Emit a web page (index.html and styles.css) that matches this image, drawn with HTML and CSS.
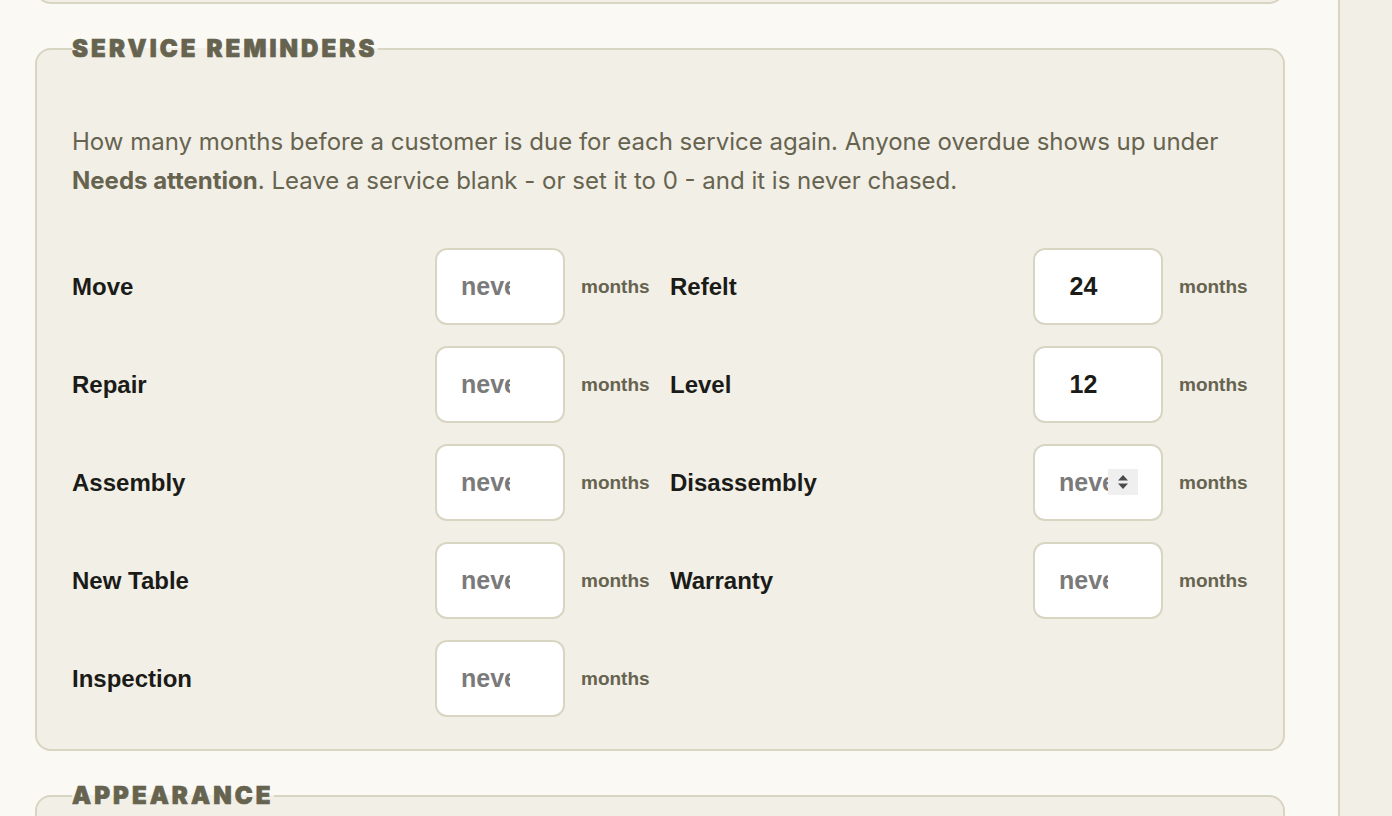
FILE: index.html
```html
<!DOCTYPE html>
<html lang="en">

<head>
    <meta charset="UTF-8">
    <meta name="viewport" content="width=device-width, initial-scale=1.0">
    <title>Settings</title>
    <link rel="stylesheet" href="styles.css">
</head>

<body>
    <div class="layout">
        <main class="settings">
            <div class="section section-above"></div>

            <fieldset class="section">
                <legend>Service Reminders</legend>
                <p class="hint">How many months before a customer is due for each service again. Anyone overdue shows up under
                    <strong>Needs attention</strong>. Leave a service blank - or set it to 0 - and it is never chased.</p>

                <div class="reminder-grid">
                    <div class="reminder">
                        <label for="move">Move</label>
                        <input type="number" id="move" min="0" placeholder="never">
                        <span class="unit">months</span>
                    </div>
                    <div class="reminder">
                        <label for="refelt">Refelt</label>
                        <input type="number" id="refelt" min="0" placeholder="never" value="24">
                        <span class="unit">months</span>
                    </div>
                    <div class="reminder">
                        <label for="repair">Repair</label>
                        <input type="number" id="repair" min="0" placeholder="never">
                        <span class="unit">months</span>
                    </div>
                    <div class="reminder">
                        <label for="level">Level</label>
                        <input type="number" id="level" min="0" placeholder="never" value="12">
                        <span class="unit">months</span>
                    </div>
                    <div class="reminder">
                        <label for="assembly">Assembly</label>
                        <input type="number" id="assembly" min="0" placeholder="never">
                        <span class="unit">months</span>
                    </div>
                    <div class="reminder">
                        <label for="disassembly">Disassembly</label>
                        <div class="spin-field">
                            <input type="number" id="disassembly" min="0" placeholder="never">
                            <span class="spin">
                                <svg width="12" height="16" viewBox="0 0 12 16">
                                    <path d="M6 1 L11 6.5 H1 Z" fill="#4a4a48"/>
                                    <path d="M6 15 L11 9.5 H1 Z" fill="#4a4a48"/>
                                </svg>
                            </span>
                        </div>
                        <span class="unit">months</span>
                    </div>
                    <div class="reminder">
                        <label for="newtable">New Table</label>
                        <input type="number" id="newtable" min="0" placeholder="never">
                        <span class="unit">months</span>
                    </div>
                    <div class="reminder">
                        <label for="warranty">Warranty</label>
                        <input type="number" id="warranty" min="0" placeholder="never">
                        <span class="unit">months</span>
                    </div>
                    <div class="reminder">
                        <label for="inspection">Inspection</label>
                        <input type="number" id="inspection" min="0" placeholder="never">
                        <span class="unit">months</span>
                    </div>
                </div>
            </fieldset>

            <fieldset class="section">
                <legend>Appearance</legend>
                <p class="hint">Choose how the app looks on this device.</p>
            </fieldset>
        </main>

        <aside class="sidebar"></aside>
    </div>
</body>

</html>
```

FILE: styles.css
```css
body {
    margin: 0;
    font-family: "Liberation Sans", Arial, sans-serif;
    background-color: #faf9f4;
    color: #1b1b18;
    overflow: hidden;
}

.layout {
    display: flex;
    min-height: 100vh;
}

.settings {
    flex: 1;
    padding: 0 53px 0 35px;
}

.sidebar {
    width: 52px;
    border-left: 2px solid #d9d5c3;
    background-color: #f2efe7;
}

/* card for each group of settings */
.section {
    margin: 0 0 32px 0;
    padding: 24px 35px 32px 35px;
    border: 2px solid #d9d5c3;
    border-radius: 16px;
    background-color: #f2efe7;
    min-width: 0;
}

.section-above {
    height: 40px;
    margin-top: -40px;
    padding: 0;
}

legend {
    padding: 0;
    font-family: Inter, "Liberation Sans", sans-serif;
    font-size: 24px;
    font-weight: 900;
    line-height: 26px;
    letter-spacing: 3.1px;
    text-transform: uppercase;
    color: #66634f;
    -webkit-text-stroke: 0.7px #66634f;
}

.hint {
    margin: 36px 0 48px 0;
    font-family: Inter, "Liberation Sans", sans-serif;
    font-size: 24px;
    line-height: 39px;
    color: #66634f;
}

.hint strong {
    font-weight: 700;
}

.reminder-grid {
    display: grid;
    grid-template-columns: 1fr 1fr;
    column-gap: 20px;
    row-gap: 21px;
}

.reminder {
    display: grid;
    grid-template-columns: 1fr 130px 69px;
    column-gap: 16px;
    align-items: center;
}

.reminder label {
    font-size: 24px;
    font-weight: bold;
    color: #1b1b18;
}

.reminder input {
    display: block;
    height: 77px;
    width: 130px;
    padding: 0 24px;
    box-sizing: border-box;
    border: 2px solid #d9d5c3;
    border-radius: 12px;
    background-color: #ffffff;
    font-family: "Liberation Sans", Arial, sans-serif;
    font-size: 25px;
    font-weight: bold;
    color: #1b1b18;
    text-align: center;
    outline: none;
}

.reminder input::placeholder {
    color: #7a7a7a;
}

/* keep room for the stepper so every field lines up */
.reminder input::-webkit-inner-spin-button {
    -webkit-appearance: none;
    width: 29px;
    margin: 0;
}

.spin-field {
    position: relative;
}

.spin {
    position: absolute;
    top: 25px;
    left: 75px;
    width: 30px;
    height: 26px;
    background-color: #efefef;
    display: flex;
    align-items: center;
    justify-content: center;
}

.unit {
    font-size: 19px;
    font-weight: bold;
    color: #66634f;
}
```
